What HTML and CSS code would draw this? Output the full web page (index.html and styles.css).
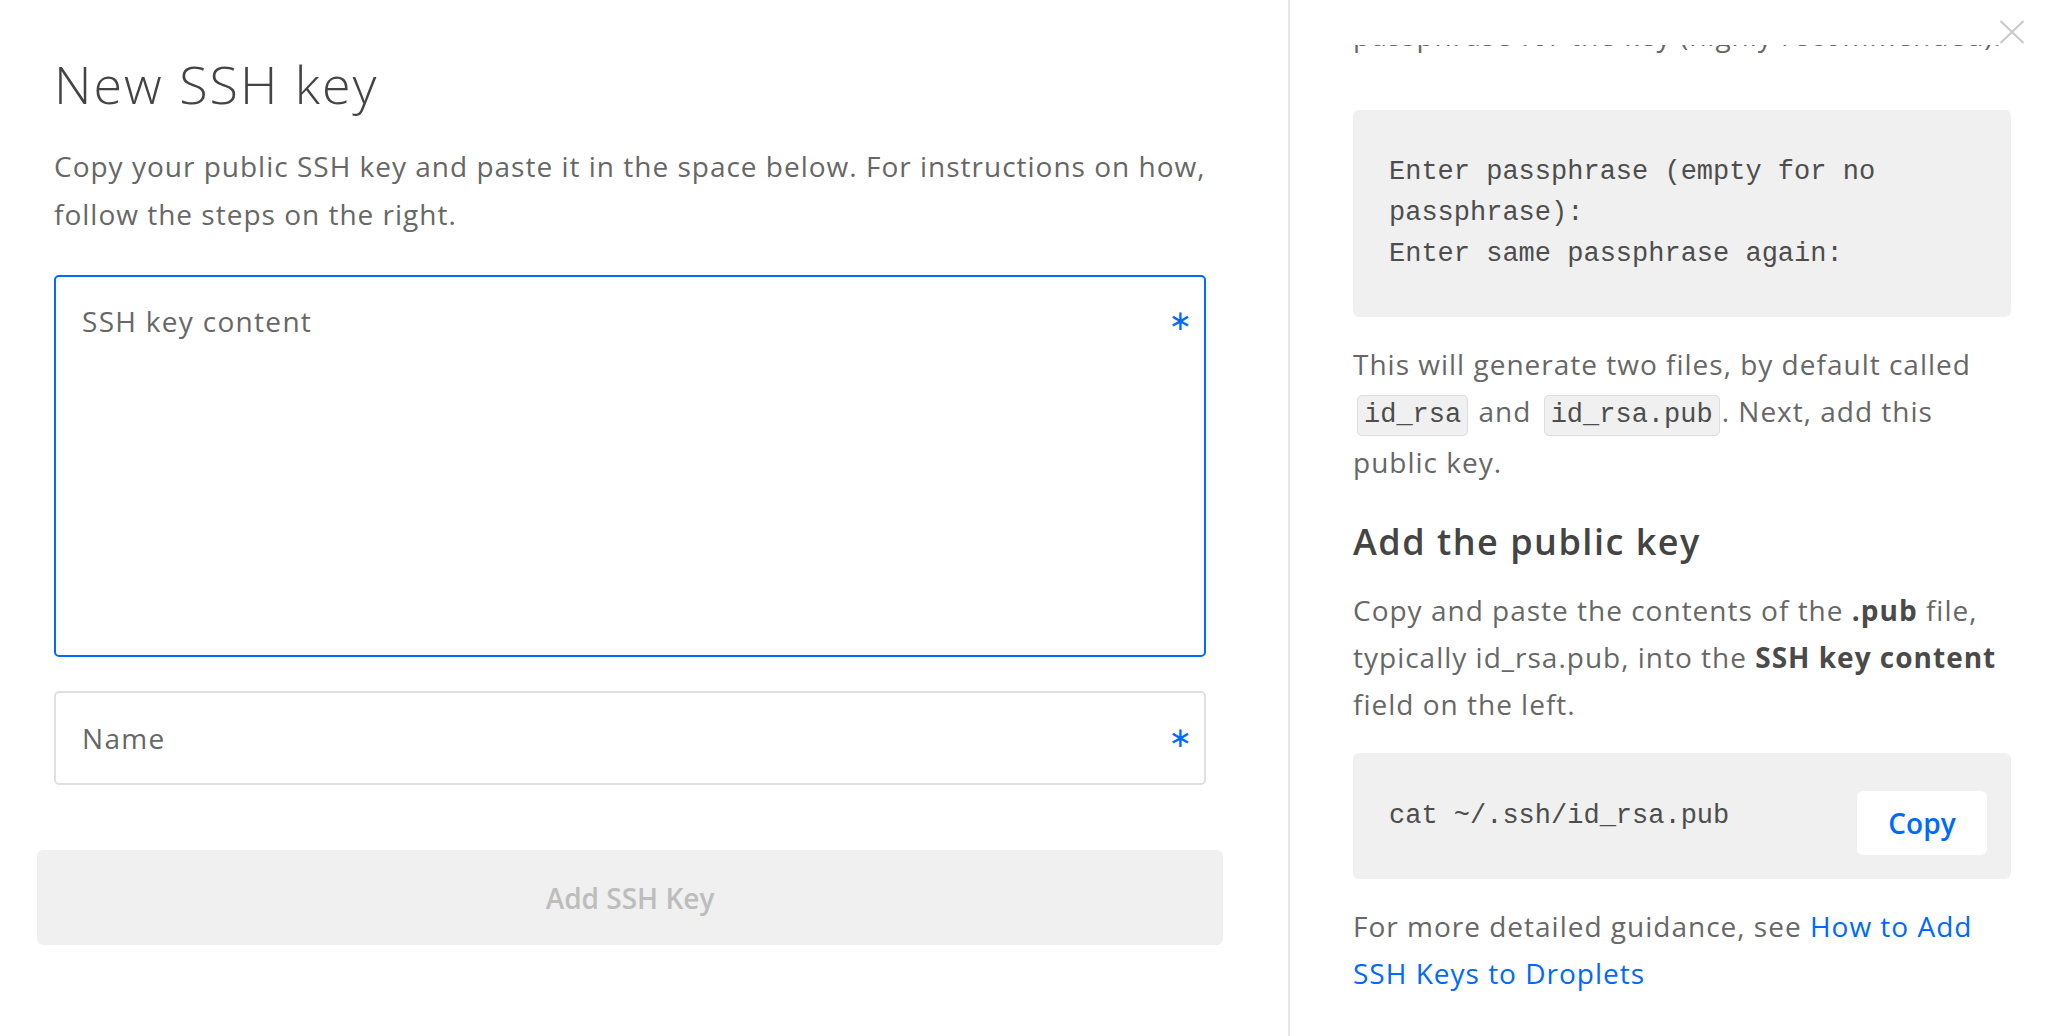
FILE: index.html
```html
<!DOCTYPE html>
<html lang="en">
<head>
<meta charset="utf-8">
<title>New SSH key</title>
<link rel="stylesheet" href="styles.css">
</head>
<body>
<div class="modal">
  <section class="form-pane">
    <h1 class="title">New SSH key</h1>
    <p class="intro">Copy your public SSH key and paste it in the space below. For instructions on how, follow the steps on the right.</p>
    <div class="field field-area">
      <span class="placeholder">SSH key content</span>
      <span class="required">∗</span>
    </div>
    <div class="field field-line">
      <span class="placeholder">Name</span>
      <span class="required">∗</span>
    </div>
    <button class="submit" type="button">Add SSH Key</button>
  </section>
  <aside class="help-pane">
    <div class="scroll-clip"><p class="clipped-line">passphrase for the key (highly recommended):</p></div>
    <pre class="code-block">Enter passphrase (empty for no passphrase):
Enter same passphrase again:</pre>
    <p class="text">This will generate two files, by default called <code class="inline">id_rsa</code> and <code class="inline">id_rsa.pub</code>. Next, add this public key.</p>
    <h2 class="subhead">Add the public key</h2>
    <p class="text">Copy and paste the contents of the <strong>.pub</strong> file, typically id_rsa.pub, into the <strong>SSH key content</strong> field on the left.</p>
    <div class="code-copy">
      <code class="cmd">cat ~/.ssh/id_rsa.pub</code>
      <button class="copy" type="button">Copy</button>
    </div>
    <p class="text last">For more detailed guidance, see <a class="link" href="#">How to Add SSH Keys to Droplets</a></p>
    <button class="close" type="button" aria-label="Close">
      <svg width="26" height="24" viewBox="0 0 26 24"><path d="M1.5 1 L24.5 23 M24.5 1 L1.5 23" stroke="#c9c9c9" stroke-width="2" fill="none"/></svg>
    </button>
  </aside>
</div>
</body>
</html>
```

FILE: styles.css
```css
html, body {
  margin: 0;
  padding: 0;
  background: #ffffff;
}

body {
  font-family: "Open Sans", "Liberation Sans", sans-serif;
  color: #676767;
  width: 2052px;
  height: 1036px;
  overflow: hidden;
}

.modal {
  display: flex;
  height: 1036px;
}

.form-pane {
  width: 1290px;
  box-sizing: border-box;
  padding: 53px 82px 0 54px;
  border-right: 2px solid #e6e6e6;
  display: flex;
  flex-direction: column;
}

.title {
  margin: 0;
  font-size: 52px;
  line-height: 62px;
  font-weight: 300;
  letter-spacing: 2px;
  color: #444444;
}

.intro {
  margin: 27px 0 0;
  font-size: 28px;
  line-height: 48px;
  font-weight: 400;
  letter-spacing: 1px;
}

.field {
  box-sizing: border-box;
  display: flex;
  justify-content: space-between;
  border-radius: 5px;
  padding: 0 12px 0 26px;
  font-size: 28px;
  line-height: 48px;
}

.field-area {
  margin-top: 37px;
  height: 382px;
  border: 2px solid #0069ff;
  align-items: flex-start;
  padding-top: 20px;
}

.field-line {
  margin-top: 34px;
  height: 94px;
  border: 2px solid #e0e0e0;
  align-items: center;
}

.placeholder {
  color: #676767;
  letter-spacing: 1.3px;
}

.required {
  color: #0069ff;
  font-family: "DejaVu Sans", sans-serif;
  font-size: 28px;
}

.submit {
  margin: 65px -17px 0;
  height: 95px;
  border: none;
  border-radius: 6px;
  background: #f0f0f0;
  color: #bdbdbd;
  font-family: inherit;
  font-size: 28px;
  font-weight: 600;
  padding: 0;
}

.help-pane {
  position: relative;
  flex: 1;
  box-sizing: border-box;
  padding: 0 41px 0 63px;
}

.scroll-clip {
  margin-top: 45px;
  height: 12px;
  overflow: hidden;
}

.clipped-line {
  margin: -33px 0 0;
  font-size: 28px;
  line-height: 47px;
  letter-spacing: 1px;
  white-space: nowrap;
}

.code-block {
  margin: 53px 0 0;
  padding: 42px 36px 42px 36px;
  background: #f0f0f0;
  border-radius: 6px;
  font-family: "Liberation Mono", "Courier New", monospace;
  font-size: 27px;
  line-height: 41px;
  color: #4d4d4d;
  white-space: pre-wrap;
}

.text {
  margin: 24px 0 0;
  font-size: 28px;
  line-height: 47px;
  letter-spacing: 1px;
}

.text strong {
  font-weight: 700;
  color: #4a4a4a;
}

.inline {
  font-family: "Liberation Mono", "Courier New", monospace;
  font-size: 27px;
  letter-spacing: 0;
  color: #4d4d4d;
  background: #f0f0f0;
  border: 1px solid #dedede;
  border-radius: 5px;
  padding: 4px 6px 5px;
  margin: 0 2px 0 4px;
}

.subhead {
  margin: 35px 0 0;
  font-size: 36px;
  line-height: 42px;
  font-weight: 600;
  letter-spacing: 1.5px;
  color: #444444;
}

.code-copy {
  margin-top: 25px;
  height: 126px;
  box-sizing: border-box;
  padding: 0 24px 0 36px;
  background: #f0f0f0;
  border-radius: 6px;
  display: flex;
  align-items: center;
  justify-content: space-between;
}

.cmd {
  font-family: "Liberation Mono", "Courier New", monospace;
  font-size: 27px;
  line-height: 41px;
  color: #4d4d4d;
}

.copy {
  margin-top: 14px;
  width: 130px;
  height: 64px;
  border: none;
  border-radius: 6px;
  background: #ffffff;
  color: #0069ff;
  font-family: inherit;
  font-size: 28px;
  font-weight: 600;
  padding: 0;
}

.last {
  margin-top: 24px;
}

.link {
  color: #0069ff;
  text-decoration: none;
}

.close {
  position: absolute;
  top: 20px;
  right: 27px;
  width: 26px;
  height: 24px;
  padding: 0;
  border: none;
  background: transparent;
  line-height: 0;
}
```
